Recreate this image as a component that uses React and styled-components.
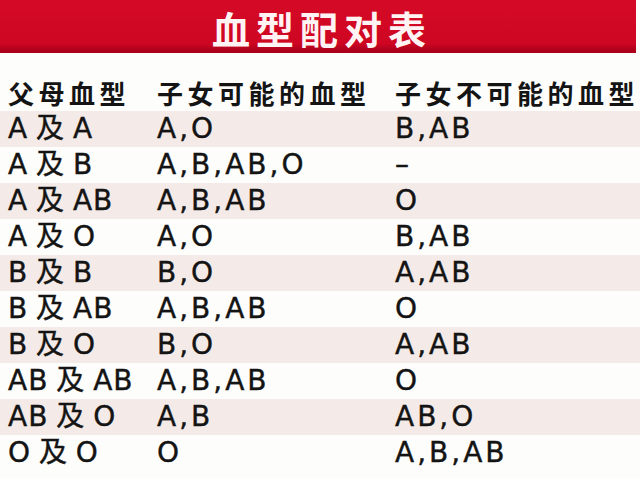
import styled, { createGlobalStyle } from "styled-components";

const GlobalStyle = createGlobalStyle`
  html, body {
    margin: 0;
    padding: 0;
    background: #fdfdfb;
  }
  body {
    width: 640px;
    height: 479px;
    overflow: hidden;
  }
`;

const Page = styled.div`
  width: 640px;
  height: 479px;
  background: #fdfdfb;
  font-family: "DejaVu Sans", "Noto Sans CJK SC", sans-serif;
  color: #141414;
`;

const TitleBar = styled.div`
  height: 53px;
  width: 636px;
  box-sizing: border-box;
  background: linear-gradient(to bottom, #d40a26 0%, #cf0622 85%, #a8001a 100%);
  border-bottom: 2px solid #b00019;
  display: flex;
  align-items: center;
  justify-content: center;
`;

const Title = styled.h1`
  margin: 0;
  padding-left: 8px;
  font-family: "Noto Sans CJK SC", sans-serif;
  font-weight: 700;
  font-size: 38px;
  letter-spacing: 6px;
  line-height: 1;
  color: #fff3f3;
  transform: translateY(2px);
`;

const Table = styled.div`
  margin-top: 22px;
  display: flex;
  flex-direction: column;
`;

const Row = styled.div`
  display: grid;
  grid-template-columns: 149px 238px 1fr;
  align-items: center;
  height: 36px;
  padding-left: 8px;
  background: ${(p) => (p.$striped ? "#f4ebe8" : "transparent")};
`;

const HeadCell = styled.div`
  font-family: "Noto Sans CJK SC", sans-serif;
  font-weight: 700;
  font-size: 26px;
  letter-spacing: 4.5px;
  white-space: nowrap;
  line-height: 1;
`;

const Cell = styled.div`
  font-family: "DejaVu Sans", "Noto Sans CJK SC", sans-serif;
  font-size: 28px;
  letter-spacing: ${(p) => (p.$pair ? "1px" : "3px")};
  word-spacing: ${(p) => (p.$pair ? "-2px" : "0")};
  -webkit-text-stroke: 0.4px #141414;
  white-space: nowrap;
  line-height: 1;
`;

const rows = [
  ["A 及 A", "A,O", "B,AB"],
  ["A 及 B", "A,B,AB,O", "–"],
  ["A 及 AB", "A,B,AB", "O"],
  ["A 及 O", "A,O", "B,AB"],
  ["B 及 B", "B,O", "A,AB"],
  ["B 及 AB", "A,B,AB", "O"],
  ["B 及 O", "B,O", "A,AB"],
  ["AB 及 AB", "A,B,AB", "O"],
  ["AB 及 O", "A,B", "AB,O"],
  ["O 及 O", "O", "A,B,AB"],
];

export default function App() {
  return (
    <Page>
      <GlobalStyle />
      <TitleBar>
        <Title>血型配对表</Title>
      </TitleBar>
      <Table>
        <Row>
          <HeadCell>父母血型</HeadCell>
          <HeadCell>子女可能的血型</HeadCell>
          <HeadCell>子女不可能的血型</HeadCell>
        </Row>
        {rows.map((r, i) => (
          <Row key={i} $striped={i % 2 === 0}>
            <Cell $pair>{r[0]}</Cell>
            <Cell>{r[1]}</Cell>
            <Cell>{r[2]}</Cell>
          </Row>
        ))}
      </Table>
    </Page>
  );
}
